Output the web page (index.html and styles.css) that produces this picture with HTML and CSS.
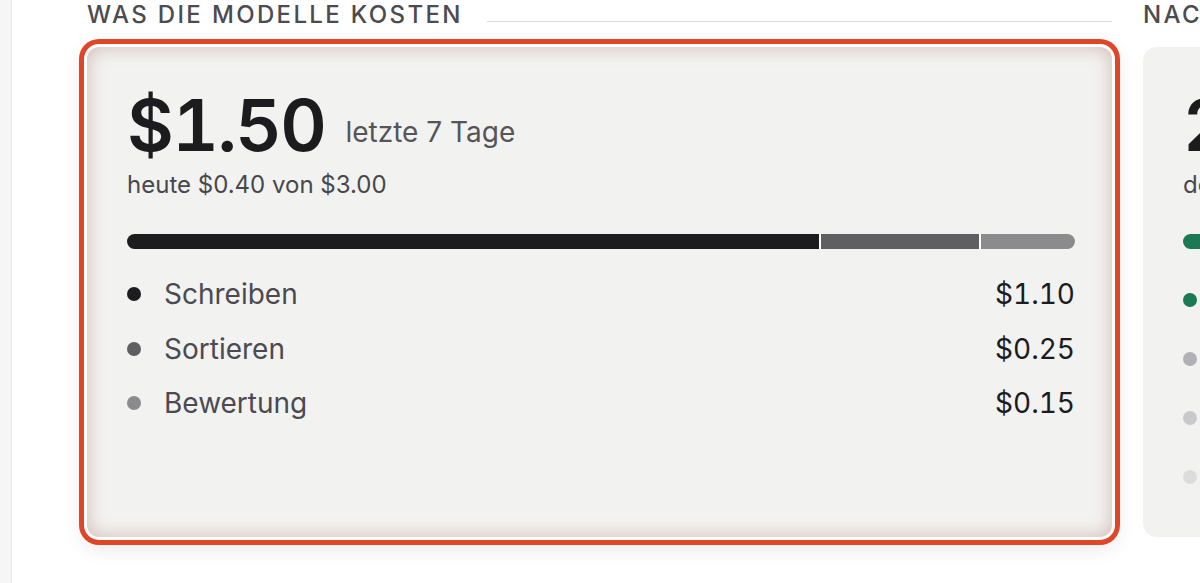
FILE: index.html
```html
<!DOCTYPE html>
<html lang="de">
<head>
<meta charset="utf-8">
<title>Kosten</title>
<link rel="stylesheet" href="styles.css">
</head>
<body>
<div class="page">
  <aside class="rail"></aside>
  <main class="sections">
    <section class="panel">
      <header class="panel-head">
        <h2>Was die Modelle kosten</h2>
        <span class="rule"></span>
      </header>
      <div class="card card--focus">
        <div class="headline">
          <span class="figure">$1.50</span>
          <span class="period">letzte 7 Tage</span>
        </div>
        <p class="sub">heute $0.40 von $3.00</p>
        <div class="stack">
          <span class="seg seg-1" style="flex-grow:110"></span>
          <span class="seg seg-2" style="flex-grow:25"></span>
          <span class="seg seg-3" style="flex-grow:15"></span>
        </div>
        <ul class="legend">
          <li><span class="dot seg-1"></span><span class="name">Schreiben</span><span class="amount">$1.10</span></li>
          <li><span class="dot seg-2"></span><span class="name">Sortieren</span><span class="amount">$0.25</span></li>
          <li><span class="dot seg-3"></span><span class="name">Bewertung</span><span class="amount">$0.15</span></li>
        </ul>
      </div>
    </section>

    <section class="panel">
      <header class="panel-head">
        <h2>Nacharbeit</h2>
        <span class="rule"></span>
      </header>
      <div class="card">
        <div class="headline">
          <span class="figure">24</span>
          <span class="period">Entwürfe</span>
        </div>
        <p class="sub">der Woche angenommen</p>
        <div class="stack">
          <span class="seg seg-ok" style="flex-grow:60"></span>
          <span class="seg seg-a" style="flex-grow:20"></span>
          <span class="seg seg-b" style="flex-grow:12"></span>
          <span class="seg seg-c" style="flex-grow:8"></span>
        </div>
        <ul class="legend legend--wide">
          <li><span class="dot seg-ok"></span><span class="name">Angenommen</span><span class="amount">14</span></li>
          <li><span class="dot seg-a"></span><span class="name">Überarbeitet</span><span class="amount">5</span></li>
          <li><span class="dot seg-b"></span><span class="name">Verworfen</span><span class="amount">3</span></li>
          <li><span class="dot seg-c"></span><span class="name">Offen</span><span class="amount">2</span></li>
        </ul>
      </div>
    </section>
  </main>
</div>
</body>
</html>
```

FILE: styles.css
```css
body {
  margin: 0;
  font-family: Inter, "Noto Sans", sans-serif;
  background: #fff;
  overflow: hidden;
}

.page {
  display: flex;
  height: 583px;
}

/* thin navigation rail on the left edge */
.rail {
  width: 11px;
  flex-shrink: 0;
  background: #f6f6f6;
  border-right: 1px solid #e7e7e7;
}

.sections {
  display: flex;
  gap: 31px;
  padding-left: 75px;
}

.panel {
  width: 1025px;
  flex-shrink: 0;
  display: flex;
  flex-direction: column;
}

.panel-head {
  display: flex;
  gap: 24px;
  height: 30px;
  margin-bottom: 17px;
}

.panel-head h2 {
  margin: 0;
  font-size: 24px;
  line-height: 30px;
  font-weight: 500;
  letter-spacing: 2.35px;
  text-transform: uppercase;
  color: #4b4b50;
  white-space: nowrap;
}

.rule {
  flex: 1;
  height: 1px;
  margin-top: 21px;
  background: #dcdcdc;
}

.card {
  box-sizing: border-box;
  height: 490px;
  padding: 40px 37px 40px 40px;
  border-radius: 14px;
  background: #f2f2f0;
  white-space: nowrap;
}

/* selected card: inner glow, white gap and red ring */
.card--focus {
  border-radius: 12px;
  box-shadow:
    inset 0 0 18px rgba(160, 100, 90, 0.4),
    0 0 0 3px #fff,
    0 0 0 8px #df4628,
    0 6px 20px 6px rgba(0, 0, 0, 0.09);
}

.headline {
  display: flex;
  align-items: flex-end;
  gap: 20px;
}

.figure {
  font-size: 72px;
  line-height: 76px;
  font-weight: 600;
  color: #1c1c1e;
  font-variant-numeric: tabular-nums;
  letter-spacing: -1.5px;
}

.period {
  font-size: 28px;
  line-height: 32px;
  padding-bottom: 15px;
  color: #555558;
}

.sub {
  margin: 7px 0 0;
  font-size: 24px;
  line-height: 30px;
  color: #48484c;
}

.stack {
  display: flex;
  gap: 2px;
  height: 15px;
  margin-top: 34px;
  border-radius: 8px;
  overflow: hidden;
  background: #fff;
}

.seg {
  flex-basis: 0;
  height: 100%;
}

.seg-1 { background: #1c1c1e; }
.seg-2 { background: #5f5f61; }
.seg-3 { background: #8b8b8d; }
.seg-ok { background: #1b7a55; }
.seg-a { background: #b1b1b5; }
.seg-b { background: #c9c9cb; }
.seg-c { background: #dcdcdd; }

.legend {
  list-style: none;
  margin: 25px 0 0;
  padding: 0;
  display: flex;
  flex-direction: column;
  gap: 14.5px;
}

.legend--wide {
  margin-top: 31px;
  gap: 19px;
}

.legend li {
  display: flex;
  align-items: center;
  height: 40px;
  font-size: 28px;
}

.dot {
  width: 14px;
  height: 14px;
  border-radius: 50%;
  margin-right: 23px;
  flex-shrink: 0;
}

.name {
  color: #4a4a50;
}

.amount {
  margin-left: auto;
  color: #1c1c1e;
  font-variant-numeric: tabular-nums;
}
```
